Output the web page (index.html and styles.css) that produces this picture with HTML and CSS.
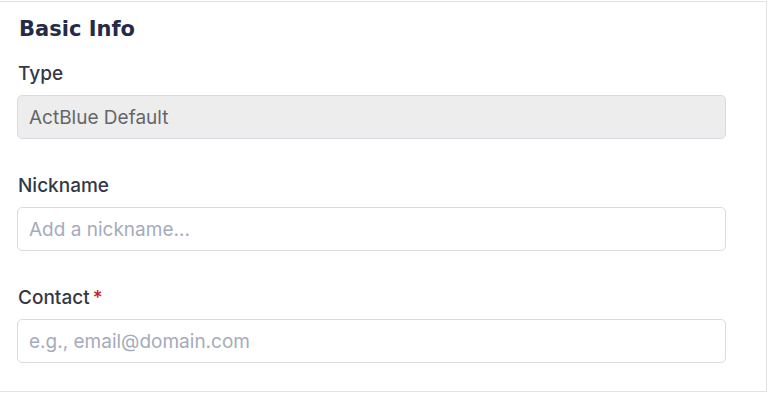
FILE: index.html
```html
<!DOCTYPE html>
<html lang="en">
<head>
<meta charset="utf-8">
<title>Basic Info</title>
<link rel="stylesheet" href="styles.css">
</head>
<body>
<section class="card">
  <h2 class="card-title">Basic Info</h2>
  <div class="fields">
    <div class="field">
      <label class="field-label" for="type">Type</label>
      <input class="field-input is-disabled" id="type" type="text" value="ActBlue Default" disabled>
    </div>
    <div class="field">
      <label class="field-label" for="nickname">Nickname</label>
      <input class="field-input" id="nickname" type="text" placeholder="Add a nickname...">
    </div>
    <div class="field">
      <label class="field-label" for="contact">Contact<span class="required">*</span></label>
      <input class="field-input" id="contact" type="text" placeholder="e.g., email@domain.com">
    </div>
  </div>
</section>
</body>
</html>
```
FILE: styles.css
```css
html, body {
  margin: 0;
  padding: 0;
  background: #ffffff;
}
body {
  font-family: Inter, "Noto Sans", "Liberation Sans", sans-serif;
}
.card {
  box-sizing: border-box;
  width: 768px;
  margin: 1px 0 0 -1px;
  padding: 13px 40px 28px 17px;
  border: 1px solid #e2e2e4;
  background: #ffffff;
}
.card-title {
  margin: 0 0 19px 2px;
  font-family: "DejaVu Sans", Inter, sans-serif;
  font-size: 21px;
  line-height: 28px;
  font-weight: 700;
  color: #252a47;
}
.fields {
  display: flex;
  flex-direction: column;
  gap: 35px;
}
.field {
  display: flex;
  flex-direction: column;
  gap: 9px;
}
.field-label {
  padding-left: 1px;
  font-size: 19px;
  line-height: 24px;
  font-weight: 500;
  color: #333848;
}
.required {
  color: #c0262d;
  margin-left: 3px;
}
.field-input {
  box-sizing: border-box;
  width: 100%;
  height: 44px;
  margin: 0;
  padding: 0 11px;
  border: 1px solid #d7dbe6;
  border-radius: 5px;
  background: #ffffff;
  font-family: inherit;
  font-size: 19px;
  color: #333848;
  outline: none;
}
.field-input::placeholder {
  color: #a5abbc;
  opacity: 1;
}
.field-input.is-disabled {
  background: #ededee;
  color: #666668;
  -webkit-text-fill-color: #666668;
  opacity: 1;
}
```
